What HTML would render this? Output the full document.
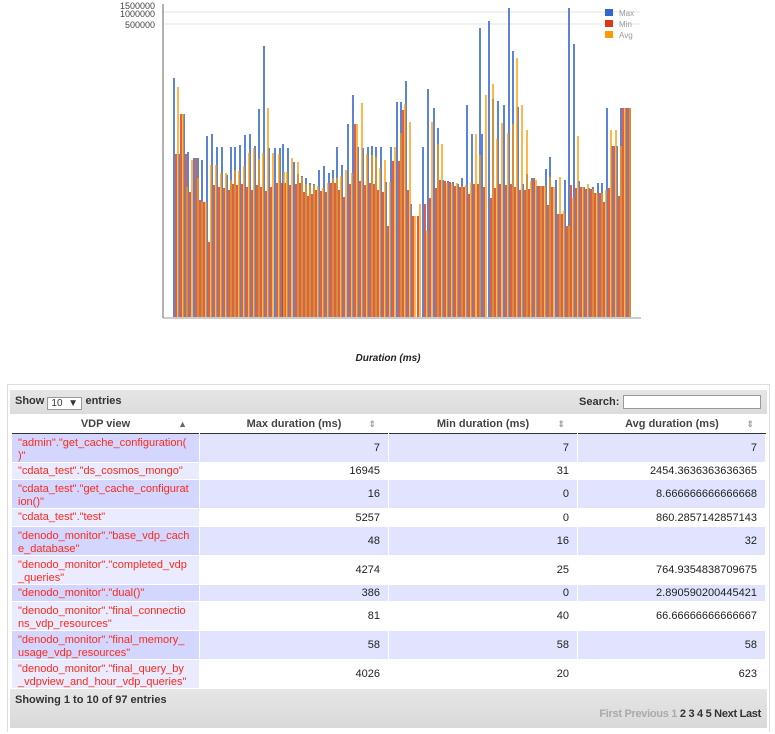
<!DOCTYPE html>
<html><head><meta charset="utf-8"><style>
*{margin:0;padding:0;box-sizing:border-box}
body{width:775px;height:734px;background:#fff;position:relative;overflow:hidden;font-family:"Liberation Sans","DejaVu Sans",sans-serif;font-size:11px;color:#333}
.abs{position:absolute}
.row{position:absolute;left:12px;width:754px;display:flex;gap:1px}
.row div{height:100%}
.c1{width:187px;color:#ff2a1a;padding:3px 0 0 6px;line-height:13px;font-size:11px}
.c2,.c3,.c4{width:188px;display:flex;align-items:center;justify-content:flex-end;padding-right:8px;color:#222}
.c2{width:188px}.c3{width:188px}.c4{width:187px}
.o .c1{background:#d3d6ff}.o .c2,.o .c3,.o .c4{background:#e2e4ff}
.e .c1{background:#eaebff}.e .c2,.e .c3,.e .c4{background:#fff}
.th{position:absolute;top:415px;height:19px;border-bottom:1px solid #333;background:#fff;font-weight:bold;color:#444;text-align:center;line-height:18px;font-size:11px}
.th span{position:absolute;right:12px;top:0;color:#999;font-size:9px}
</style></head><body>
<svg class="abs" style="left:0;top:0" width="775" height="380">
<g font-family="Liberation Sans,sans-serif" font-size="9" fill="#444" text-anchor="end">
<text x="155" y="9">1500000</text><text x="155" y="17">1000000</text><text x="155" y="28">500000</text></g>
<line x1="163" y1="12" x2="640" y2="12" stroke="#e6e6e6"/>
<line x1="163" y1="24" x2="640" y2="24" stroke="#e6e6e6"/>
<g fill="#3366cc" opacity="0.8">
<rect x="173" y="78" width="2" height="239"/><rect x="178" y="154" width="2" height="163"/><rect x="183" y="114" width="2" height="203"/><rect x="187" y="152" width="2" height="165"/><rect x="193" y="158" width="2" height="159"/><rect x="197" y="158" width="2" height="159"/><rect x="201" y="160" width="2" height="157"/><rect x="206" y="136" width="2" height="181"/><rect x="211" y="134" width="2" height="183"/><rect x="216" y="147" width="2" height="170"/><rect x="221" y="147" width="2" height="170"/><rect x="226" y="175" width="2" height="142"/><rect x="230" y="147" width="2" height="170"/><rect x="234" y="147" width="2" height="170"/><rect x="239" y="145" width="2" height="172"/><rect x="244" y="135" width="2" height="182"/><rect x="249" y="134" width="2" height="183"/><rect x="254" y="146" width="2" height="171"/><rect x="258" y="109" width="2" height="208"/><rect x="263" y="46" width="2" height="271"/><rect x="268" y="148" width="2" height="169"/><rect x="274" y="148" width="2" height="169"/><rect x="279" y="148" width="2" height="169"/><rect x="282" y="144" width="2" height="173"/><rect x="287" y="148" width="2" height="169"/><rect x="293" y="162" width="2" height="155"/><rect x="297" y="174" width="2" height="143"/><rect x="301" y="176" width="2" height="141"/><rect x="305" y="178" width="2" height="139"/><rect x="309" y="183" width="2" height="134"/><rect x="313" y="184" width="2" height="133"/><rect x="318" y="170" width="2" height="147"/><rect x="323" y="166" width="2" height="151"/><rect x="328" y="173" width="2" height="144"/><rect x="332" y="170" width="2" height="147"/><rect x="336" y="147" width="2" height="170"/><rect x="341" y="165" width="2" height="152"/><rect x="347" y="124" width="2" height="193"/><rect x="352" y="95" width="2" height="222"/><rect x="357" y="147" width="2" height="170"/><rect x="362" y="148" width="2" height="169"/><rect x="367" y="147" width="2" height="170"/><rect x="371" y="146" width="2" height="171"/><rect x="375" y="147" width="2" height="170"/><rect x="380" y="147" width="2" height="170"/><rect x="385" y="182" width="2" height="135"/><rect x="390" y="147" width="2" height="170"/><rect x="396" y="102" width="2" height="215"/><rect x="400" y="102" width="2" height="215"/><rect x="405" y="81" width="2" height="236"/><rect x="410" y="204" width="2" height="113"/><rect x="422" y="147" width="2" height="170"/><rect x="427" y="89" width="2" height="228"/><rect x="433" y="108" width="2" height="209"/><rect x="437" y="128" width="2" height="189"/><rect x="442" y="180" width="2" height="137"/><rect x="447" y="181" width="2" height="136"/><rect x="452" y="182" width="2" height="135"/><rect x="457" y="184" width="2" height="133"/><rect x="461" y="178" width="2" height="139"/><rect x="466" y="105" width="2" height="212"/><rect x="471" y="134" width="2" height="183"/><rect x="479" y="28" width="2" height="289"/><rect x="481" y="134" width="2" height="183"/><rect x="488" y="21" width="2" height="296"/><rect x="492" y="99" width="2" height="218"/><rect x="497" y="101" width="2" height="216"/><rect x="503" y="105" width="2" height="212"/><rect x="508" y="8" width="2" height="309"/><rect x="512" y="51" width="2" height="266"/><rect x="517" y="107" width="2" height="210"/><rect x="522" y="184" width="2" height="133"/><rect x="526" y="174" width="2" height="143"/><rect x="531" y="178" width="2" height="139"/><rect x="536" y="186" width="2" height="131"/><rect x="540" y="186" width="2" height="131"/><rect x="545" y="169" width="2" height="148"/><rect x="549" y="157" width="2" height="160"/><rect x="555" y="180" width="2" height="137"/><rect x="559" y="214" width="2" height="103"/><rect x="564" y="180" width="2" height="137"/><rect x="568" y="8" width="2" height="309"/><rect x="573" y="44" width="2" height="273"/><rect x="578" y="181" width="2" height="136"/><rect x="583" y="187" width="2" height="130"/><rect x="588" y="188" width="2" height="129"/><rect x="592" y="187" width="2" height="130"/><rect x="597" y="183" width="2" height="134"/><rect x="601" y="183" width="2" height="134"/><rect x="606" y="108" width="2" height="209"/><rect x="611" y="146" width="2" height="171"/><rect x="616" y="146" width="2" height="171"/><rect x="620" y="108" width="2" height="209"/><rect x="625" y="108" width="2" height="209"/><rect x="629" y="108" width="2" height="209"/>
</g>
<g fill="#dc3912" opacity="0.8">
<rect x="175" y="154" width="2" height="163"/><rect x="180" y="114" width="2" height="203"/><rect x="185" y="154" width="2" height="163"/><rect x="189" y="192" width="2" height="125"/><rect x="195" y="158" width="2" height="159"/><rect x="199" y="200" width="2" height="117"/><rect x="203" y="202" width="2" height="115"/><rect x="208" y="242" width="2" height="75"/><rect x="213" y="185" width="2" height="132"/><rect x="218" y="187" width="2" height="130"/><rect x="223" y="188" width="2" height="129"/><rect x="228" y="190" width="2" height="127"/><rect x="232" y="184" width="2" height="133"/><rect x="236" y="185" width="2" height="132"/><rect x="241" y="184" width="2" height="133"/><rect x="246" y="187" width="2" height="130"/><rect x="251" y="190" width="2" height="127"/><rect x="256" y="185" width="2" height="132"/><rect x="260" y="187" width="2" height="130"/><rect x="265" y="191" width="2" height="126"/><rect x="270" y="187" width="2" height="130"/><rect x="276" y="183" width="2" height="134"/><rect x="281" y="183" width="2" height="134"/><rect x="284" y="183" width="2" height="134"/><rect x="289" y="185" width="2" height="132"/><rect x="295" y="184" width="2" height="133"/><rect x="299" y="183" width="2" height="134"/><rect x="303" y="192" width="2" height="125"/><rect x="307" y="196" width="2" height="121"/><rect x="311" y="194" width="2" height="123"/><rect x="315" y="190" width="2" height="127"/><rect x="320" y="191" width="2" height="126"/><rect x="325" y="192" width="2" height="125"/><rect x="330" y="183" width="2" height="134"/><rect x="334" y="183" width="2" height="134"/><rect x="338" y="190" width="2" height="127"/><rect x="343" y="197" width="2" height="120"/><rect x="349" y="184" width="2" height="133"/><rect x="354" y="124" width="2" height="193"/><rect x="359" y="181" width="2" height="136"/><rect x="364" y="185" width="2" height="132"/><rect x="369" y="183" width="2" height="134"/><rect x="373" y="184" width="2" height="133"/><rect x="377" y="190" width="2" height="127"/><rect x="382" y="192" width="2" height="125"/><rect x="387" y="226" width="2" height="91"/><rect x="392" y="161" width="2" height="156"/><rect x="398" y="161" width="2" height="156"/><rect x="402" y="110" width="2" height="207"/><rect x="407" y="190" width="2" height="127"/><rect x="412" y="216" width="2" height="101"/><rect x="417" y="216" width="2" height="101"/><rect x="424" y="204" width="2" height="113"/><rect x="429" y="198" width="2" height="119"/><rect x="435" y="188" width="2" height="129"/><rect x="439" y="180" width="2" height="137"/><rect x="444" y="181" width="2" height="136"/><rect x="449" y="182" width="2" height="135"/><rect x="454" y="186" width="2" height="131"/><rect x="459" y="187" width="2" height="130"/><rect x="463" y="187" width="2" height="130"/><rect x="468" y="194" width="2" height="123"/><rect x="473" y="184" width="2" height="133"/><rect x="477" y="184" width="2" height="133"/><rect x="483" y="187" width="2" height="130"/><rect x="490" y="198" width="2" height="119"/><rect x="494" y="188" width="2" height="129"/><rect x="499" y="184" width="2" height="133"/><rect x="505" y="185" width="2" height="132"/><rect x="510" y="184" width="2" height="133"/><rect x="514" y="187" width="2" height="130"/><rect x="519" y="190" width="2" height="127"/><rect x="524" y="190" width="2" height="127"/><rect x="528" y="189" width="2" height="128"/><rect x="533" y="178" width="2" height="139"/><rect x="538" y="186" width="2" height="131"/><rect x="542" y="186" width="2" height="131"/><rect x="547" y="205" width="2" height="112"/><rect x="551" y="187" width="2" height="130"/><rect x="557" y="214" width="2" height="103"/><rect x="561" y="214" width="2" height="103"/><rect x="566" y="226" width="2" height="91"/><rect x="570" y="185" width="2" height="132"/><rect x="575" y="188" width="2" height="129"/><rect x="580" y="187" width="2" height="130"/><rect x="585" y="189" width="2" height="128"/><rect x="590" y="189" width="2" height="128"/><rect x="594" y="193" width="2" height="124"/><rect x="599" y="193" width="2" height="124"/><rect x="603" y="202" width="2" height="115"/><rect x="608" y="188" width="2" height="129"/><rect x="613" y="146" width="2" height="171"/><rect x="618" y="196" width="2" height="121"/><rect x="622" y="108" width="2" height="209"/><rect x="627" y="108" width="2" height="209"/>
</g>
<g fill="#ff9900" opacity="0.7">
<rect x="177" y="87" width="2" height="230"/><rect x="182" y="114" width="2" height="203"/><rect x="186" y="187" width="2" height="130"/><rect x="191" y="160" width="2" height="157"/><rect x="197" y="178" width="2" height="139"/><rect x="201" y="202" width="2" height="115"/><rect x="205" y="202" width="2" height="115"/><rect x="210" y="165" width="2" height="152"/><rect x="215" y="165" width="2" height="152"/><rect x="220" y="173" width="2" height="144"/><rect x="225" y="173" width="2" height="144"/><rect x="230" y="180" width="2" height="137"/><rect x="234" y="170" width="2" height="147"/><rect x="238" y="171" width="2" height="146"/><rect x="243" y="166" width="2" height="151"/><rect x="248" y="153" width="2" height="164"/><rect x="253" y="148" width="2" height="169"/><rect x="258" y="159" width="2" height="158"/><rect x="262" y="153" width="2" height="164"/><rect x="267" y="108" width="2" height="209"/><rect x="272" y="153" width="2" height="164"/><rect x="278" y="154" width="2" height="163"/><rect x="283" y="172" width="2" height="145"/><rect x="286" y="172" width="2" height="145"/><rect x="291" y="158" width="2" height="159"/><rect x="297" y="162" width="2" height="155"/><rect x="301" y="177" width="2" height="140"/><rect x="305" y="184" width="2" height="133"/><rect x="309" y="185" width="2" height="132"/><rect x="313" y="185" width="2" height="132"/><rect x="317" y="186" width="2" height="131"/><rect x="322" y="188" width="2" height="129"/><rect x="327" y="183" width="2" height="134"/><rect x="332" y="178" width="2" height="139"/><rect x="336" y="178" width="2" height="139"/><rect x="340" y="176" width="2" height="141"/><rect x="345" y="170" width="2" height="147"/><rect x="351" y="173" width="2" height="144"/><rect x="356" y="124" width="2" height="193"/><rect x="361" y="103" width="2" height="214"/><rect x="366" y="154" width="2" height="163"/><rect x="371" y="155" width="2" height="162"/><rect x="375" y="157" width="2" height="160"/><rect x="379" y="168" width="2" height="149"/><rect x="384" y="160" width="2" height="157"/><rect x="389" y="182" width="2" height="135"/><rect x="394" y="147" width="2" height="170"/><rect x="400" y="133" width="2" height="184"/><rect x="404" y="104" width="2" height="213"/><rect x="409" y="122" width="2" height="195"/><rect x="414" y="216" width="2" height="101"/><rect x="419" y="204" width="2" height="113"/><rect x="426" y="231" width="2" height="86"/><rect x="431" y="122" width="2" height="195"/><rect x="437" y="144" width="2" height="173"/><rect x="441" y="144" width="2" height="173"/><rect x="446" y="183" width="2" height="134"/><rect x="451" y="183" width="2" height="134"/><rect x="456" y="183" width="2" height="134"/><rect x="461" y="186" width="2" height="131"/><rect x="465" y="185" width="2" height="132"/><rect x="470" y="183" width="2" height="134"/><rect x="475" y="134" width="2" height="183"/><rect x="479" y="155" width="2" height="162"/><rect x="485" y="95" width="2" height="222"/><rect x="492" y="84" width="2" height="233"/><rect x="496" y="139" width="2" height="178"/><rect x="501" y="123" width="2" height="194"/><rect x="507" y="133" width="2" height="184"/><rect x="512" y="124" width="2" height="193"/><rect x="516" y="58" width="2" height="259"/><rect x="521" y="105" width="2" height="212"/><rect x="526" y="130" width="2" height="187"/><rect x="530" y="181" width="2" height="136"/><rect x="535" y="180" width="2" height="137"/><rect x="540" y="186" width="2" height="131"/><rect x="544" y="186" width="2" height="131"/><rect x="549" y="177" width="2" height="140"/><rect x="553" y="187" width="2" height="130"/><rect x="559" y="177" width="2" height="140"/><rect x="563" y="211" width="2" height="106"/><rect x="568" y="226" width="2" height="91"/><rect x="572" y="198" width="2" height="119"/><rect x="577" y="136" width="2" height="181"/><rect x="582" y="187" width="2" height="130"/><rect x="587" y="184" width="2" height="133"/><rect x="592" y="189" width="2" height="128"/><rect x="596" y="193" width="2" height="124"/><rect x="601" y="193" width="2" height="124"/><rect x="605" y="190" width="2" height="127"/><rect x="610" y="130" width="2" height="187"/><rect x="615" y="130" width="2" height="187"/><rect x="620" y="146" width="2" height="171"/><rect x="624" y="108" width="2" height="209"/><rect x="629" y="108" width="2" height="209"/>
</g>
<line x1="163" y1="4" x2="163" y2="318" stroke="#666"/>
<line x1="163" y1="318" x2="641" y2="318" stroke="#999"/>
<rect x="605" y="9" width="8" height="7" fill="#3366cc"/><rect x="605" y="20" width="8" height="7" fill="#dc3912"/><rect x="605" y="31" width="8" height="7" fill="#ff9900"/>
<g font-family="Liberation Sans,sans-serif" font-size="8" fill="#999"><text x="619" y="16">Max</text><text x="619" y="27">Min</text><text x="619" y="38">Avg</text></g>
<text x="388" y="361" text-anchor="middle" font-family="Liberation Sans,sans-serif" font-size="10" font-weight="bold" font-style="italic" fill="#222">Duration (ms)</text>
</svg>
<div class="abs" style="left:7px;top:384px;width:763px;height:348px;border:1px solid #ddd;border-bottom:none"></div>
<div class="abs" style="left:10px;top:390px;width:757px;height:24px;background:linear-gradient(#e6e6e6,#dcdcdc)"></div>
<div class="abs" style="left:15px;top:395px;font-weight:bold;color:#333;font-size:11px">Show <span style="display:inline-block;width:35px;height:13px;border:1px solid #999;background:#fff;font-weight:normal;font-size:10px;line-height:11px;padding-left:3px;vertical-align:-2px">10 &nbsp;▼</span> entries</div>
<div class="abs" style="left:579px;top:396px;font-weight:bold;color:#333;font-size:11px">Search:</div>
<div class="abs" style="left:623px;top:395px;width:138px;height:14px;border:1px solid #999;background:#fff"></div>
<div class="th" style="left:12px;width:187px">VDP view<span style="color:#666">▲</span></div>
<div class="th" style="left:200px;width:188px">Max duration (ms)<span>⇕</span></div>
<div class="th" style="left:389px;width:188px">Min duration (ms)<span>⇕</span></div>
<div class="th" style="left:578px;width:188px">Avg duration (ms)<span>⇕</span></div>
<div class="row o" style="top:434px;height:28px"><div class="c1">"admin"."get_cache_configuration(<br>)"</div><div class="c2">7</div><div class="c3">7</div><div class="c4">7</div></div>
<div class="row e" style="top:463px;height:16px"><div class="c1" style="padding-top:2px">"cdata_test"."ds_cosmos_mongo"</div><div class="c2">16945</div><div class="c3">31</div><div class="c4">2454.3636363636365</div></div>
<div class="row o" style="top:480px;height:28px"><div class="c1">"cdata_test"."get_cache_configurat<br>ion()"</div><div class="c2">16</div><div class="c3">0</div><div class="c4">8.666666666666668</div></div>
<div class="row e" style="top:509px;height:17px"><div class="c1" style="padding-top:2px">"cdata_test"."test"</div><div class="c2">5257</div><div class="c3">0</div><div class="c4">860.2857142857143</div></div>
<div class="row o" style="top:527px;height:28px"><div class="c1">"denodo_monitor"."base_vdp_cach<br>e_database"</div><div class="c2">48</div><div class="c3">16</div><div class="c4">32</div></div>
<div class="row e" style="top:556px;height:28px"><div class="c1">"denodo_monitor"."completed_vdp<br>_queries"</div><div class="c2">4274</div><div class="c3">25</div><div class="c4">764.9354838709675</div></div>
<div class="row o" style="top:585px;height:16px"><div class="c1" style="padding-top:2px">"denodo_monitor"."dual()"</div><div class="c2">386</div><div class="c3">0</div><div class="c4">2.890590200445421</div></div>
<div class="row e" style="top:602px;height:28px"><div class="c1">"denodo_monitor"."final_connectio<br>ns_vdp_resources"</div><div class="c2">81</div><div class="c3">40</div><div class="c4">66.66666666666667</div></div>
<div class="row o" style="top:631px;height:28px"><div class="c1">"denodo_monitor"."final_memory_<br>usage_vdp_resources"</div><div class="c2">58</div><div class="c3">58</div><div class="c4">58</div></div>
<div class="row e" style="top:660px;height:28px"><div class="c1">"denodo_monitor"."final_query_by<br>_vdpview_and_hour_vdp_queries"</div><div class="c2">4026</div><div class="c3">20</div><div class="c4">623</div></div>
<div class="abs" style="left:10px;top:689px;width:757px;height:39px;background:linear-gradient(#e6e6e6,#d9d9d9)"></div>
<div class="abs" style="left:15px;top:694px;font-weight:bold;color:#333;font-size:11px">Showing 1 to 10 of 97 entries</div>
<div class="abs" style="right:14px;top:708px;font-weight:bold;font-size:11px;color:#333;letter-spacing:-0.3px"><span style="color:#aaa">First Previous 1 </span>2 3 4 5 Next Last</div>
</body></html>
